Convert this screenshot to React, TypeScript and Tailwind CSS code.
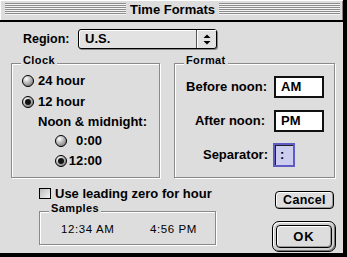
import { useId } from 'react'

function Radio({ on }: { on?: boolean }) {
  const id = useId()
  return (
    <svg width="12" height="12" viewBox="0 0 12 12" className="shrink-0">
      <defs>
        <radialGradient id={id} cx="35%" cy="30%" r="75%">
          <stop offset="0%" stopColor="#ffffff" />
          <stop offset="100%" stopColor="#7a7a7a" />
        </radialGradient>
      </defs>
      <circle cx="6" cy="6" r="5.5" fill={`url(#${id})`} stroke="#000" />
      {on && <circle cx="6" cy="6" r="3" fill="#111" />}
    </svg>
  )
}

function Group({ label, className, children }: { label: string; className: string; children?: React.ReactNode }) {
  return (
    <div
      className={`relative border border-[#8a8a8a] shadow-[1px_1px_0_#fff,inset_1px_1px_0_#fff] ${className}`}
    >
      <span className="absolute top-[-11px] left-[9px] px-[2px] bg-[#dddddd] text-[11px] leading-[14px] font-bold tracking-[0.4px]">
        {label}
      </span>
      {children}
    </div>
  )
}

function Field({ value }: { value: string }) {
  return (
    <div className="w-[50px] h-[22px] bg-white border-2 border-[#111] flex items-center pl-[5px] text-[13px] font-bold">
      {value}
    </div>
  )
}

export default function App() {
  return (
    <div className="w-[347px] h-[257px] bg-[#dddddd] border-r-4 border-b-4 border-black font-['Liberation_Sans',Arial,sans-serif] text-black select-none overflow-hidden">
      {/* Title bar */}
      <div className="h-[22px] border-b-2 border-black bg-[#dddddd] shadow-[inset_1px_1px_0_#fff,inset_-1px_0_0_#888] flex items-start pl-[5px] pr-[3px] pt-[3px]">
        <div className="flex-1 h-[12px] bg-[repeating-linear-gradient(to_bottom,#8c8c8c_0px,#8c8c8c_1px,#f4f4f4_1px,#f4f4f4_2px)]" />
        <div className="px-[4px] text-[13px] leading-[16px] font-bold -mt-[1px]">Time Formats</div>
        <div className="flex-1 h-[12px] bg-[repeating-linear-gradient(to_bottom,#8c8c8c_0px,#8c8c8c_1px,#f4f4f4_1px,#f4f4f4_2px)]" />
      </div>

      {/* Region */}
      <div className="mt-[7px] h-[20px] flex items-center pl-[23px]">
        <span className="w-[55px] text-[12.5px] font-bold">Region:</span>
        <div className="w-[139px] h-[20px] rounded-[3px] border border-black bg-[#e2e2e2] shadow-[1px_1px_0_#888,inset_1px_1px_0_#fff] flex items-center">
          <span className="flex-1 pl-[6px] text-[13px] font-bold">U.S.</span>
          <div className="w-[20px] h-full border-l border-[#555] flex items-center justify-center shadow-[inset_1px_1px_0_#fff]">
            <svg width="8" height="11" viewBox="0 0 8 11">
              <polygon points="0.5,4 4,0.5 7.5,4" fill="#000" />
              <polygon points="0.5,7 4,10.5 7.5,7" fill="#000" />
            </svg>
          </div>
        </div>
      </div>

      {/* Groups */}
      <div className="mt-[14px] flex items-start">
        <Group label="Clock" className="ml-[11px] w-[149px] h-[115px]">
          <div className="flex flex-col pt-[7px] text-[13px] font-bold">
            <div className="h-[20px] flex items-center pl-[10px] gap-[4px]">
              <Radio />
              <span>24 hour</span>
            </div>
            <div className="h-[22px] flex items-center pl-[10px] gap-[4px]">
              <Radio on />
              <span>12 hour</span>
            </div>
            <div className="h-[18px] flex items-center pl-[26px]">Noon &amp; midnight:</div>
            <div className="h-[20px] flex items-center pl-[43px]">
              <Radio />
              <span className="w-[35px] text-right">0:00</span>
            </div>
            <div className="h-[20px] flex items-center pl-[43px]">
              <Radio on />
              <span className="w-[35px] text-right">12:00</span>
            </div>
          </div>
        </Group>

        <Group label="Format" className="ml-[14px] w-[161px] h-[115px]">
          <div className="flex flex-col pt-[12px] text-[13px] font-bold">
            <div className="h-[22px] flex items-center">
              <span className="w-[92px] text-right">Before noon:</span>
              <div className="ml-[7px]">
                <Field value="AM" />
              </div>
            </div>
            <div className="mt-[12px] h-[22px] flex items-center">
              <span className="w-[90px] text-right">After noon:</span>
              <div className="ml-[9px]">
                <Field value="PM" />
              </div>
            </div>
            <div className="mt-[11px] h-[24px] flex items-center">
              <span className="w-[93px] text-right">Separator:</span>
              <div className="ml-[5px] w-[22px] h-[24px] border-2 border-[#5c5cc4] bg-[#cdcdf0] shadow-[inset_1px_1px_0_#222] flex items-center pl-[5px]">
                :
              </div>
            </div>
          </div>
        </Group>
      </div>

      {/* Bottom */}
      <div className="flex items-start">
        <div className="ml-[39px] mt-[10px] w-[177px] flex flex-col">
          <div className="h-[11px] flex items-center gap-[4px]">
            <div className="w-[12px] h-[11px] border border-black bg-[linear-gradient(135deg,#bbb,#f4f4f4)]" />
            <span className="text-[13px] font-bold whitespace-nowrap">Use leading zero for hour</span>
          </div>
          <Group label="Samples" className="mt-[12px] w-[177px] h-[34px]">
            <div className="flex items-center pt-[9px] pl-[21px] text-[11.5px] tracking-[0.6px]">
              <span className="w-[89px]">12:34 AM</span>
              <span>4:56 PM</span>
            </div>
          </Group>
        </div>

        <div className="ml-auto mr-[7px] flex flex-col items-end">
          <div className="mt-[13px] mr-[2px] w-[59px] h-[18px] rounded-[4px] border border-black bg-[#dddddd] shadow-[inset_1px_1px_0_#fff,inset_-1px_-1px_0_#999] flex items-center justify-center text-[12.5px] font-bold tracking-[0.3px]">
            Cancel
          </div>
          <div className="mt-[12px] w-[64px] h-[31px] rounded-[7px] border border-black bg-[#cfcfcf] shadow-[inset_1px_1px_0_#fff,inset_-1px_-1px_0_#777] p-[3px]">
            <div className="w-full h-full rounded-[4px] border border-black bg-[#dddddd] shadow-[inset_1px_1px_0_#fff,inset_-1px_-1px_0_#999] flex items-center justify-center text-[13px] font-bold tracking-[1px]">
              OK
            </div>
          </div>
        </div>
      </div>
    </div>
  )
}
